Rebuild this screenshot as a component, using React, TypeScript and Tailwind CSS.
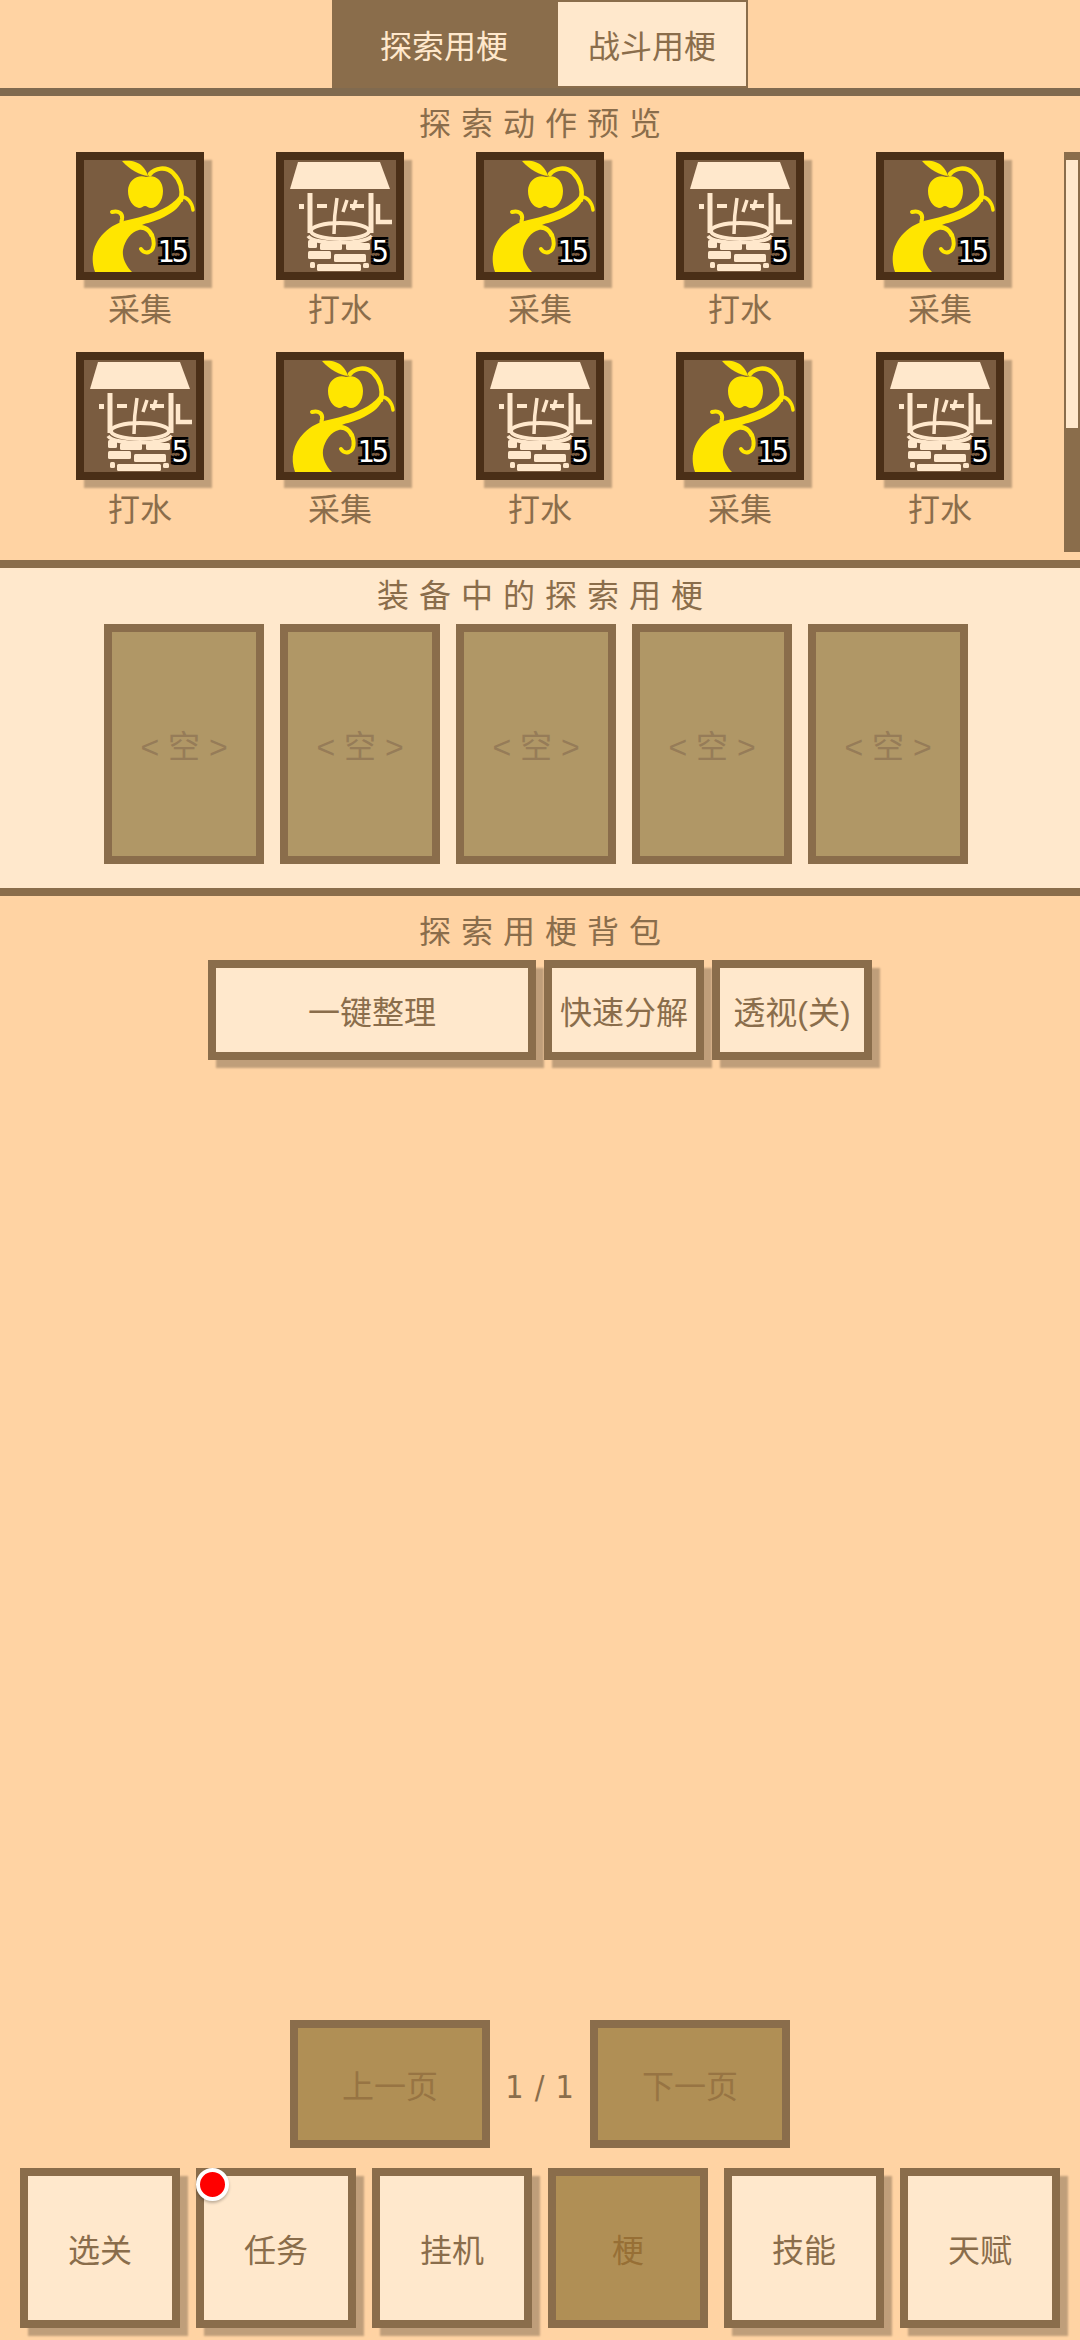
import React from "react";

const actions = [
  "gather", "water", "gather", "water", "gather",
  "water", "gather", "water", "gather", "water",
];

function VineIcon() {
  const y = "#ffe600";
  return (
    <svg viewBox="0 0 112 112" className="w-full h-full block">
      {/* leaf */}
      <path d="M38 1 C48 0 54 2 58 6 C61 9 63 12 64 16 C56 15 46 10 38 1 Z" fill={y} />
      {/* apple */}
      <path d="M62 17 C70 14 79 19 79 31 C79 41 73 48 67 48 C64 48 63 46 61 46 C59 46 58 48 55 48 C49 47 44 40 44 31 C44 20 54 14 62 17 Z" fill={y} />
      {/* arc over the apple */}
      <path d="M66 14 C71 8 82 6 89 13 C96 20 99 30 97 40" fill="none" stroke={y} strokeWidth="4.5" strokeLinecap="round" />
      <path d="M98 37 C103 37 108 42 109 50" fill="none" stroke={y} strokeWidth="3.5" strokeLinecap="round" />
      {/* trunk and curl */}
      <path d="M11 112 C6 98 9 84 20 73 C27 66 35 62 44 60 C58 57 72 53 84 46 C90 42 93 39 95 36 L99 38 C97 46 90 52 80 57 C70 62 62 63 58 65 C64 66 69 70 70 76 L66 77 C64 72 60 69 55 70 C47 72 41 80 39 90 C38 98 42 106 48 112 Z" fill={y} />
      <path d="M68 75 C71 83 70 90 65 92 C62 93 59 92 57 89" fill="none" stroke={y} strokeWidth="4" strokeLinecap="round" />
      {/* sprout */}
      <path d="M28 52 C35 50 39 54 38 59 C37 62 37 64 39 66" fill="none" stroke={y} strokeWidth="4" strokeLinecap="round" />
    </svg>
  );
}

function WellIcon() {
  const c = "#ffe8cc";
  return (
    <svg viewBox="0 0 112 112" className="w-full h-full block">
      <path d="M14 2 L96 2 L106 29 L6 29 Z" fill={c} />
      <g fill="none" stroke={c} strokeWidth="5">
        <path d="M26 33 V73" />
        <path d="M87 33 V73" />
        <path d="M53 38 C51 50 50 60 50 74" strokeWidth="3.5" />
        <path d="M33 46 H43 M66 46 H80" strokeWidth="4" />
        <path d="M63 40 L59 52 M72 40 L69 50" strokeWidth="3.5" />
        <path d="M94 44 V62 H108" strokeWidth="4.5" />
        <ellipse cx="56" cy="71" rx="29" ry="8" strokeWidth="4" />
        <path d="M24 76 C30 85 80 85 88 76" strokeWidth="3.5" />
      </g>
      <rect x="15" y="44" width="5" height="5" fill={c} />
      <g fill={c}>
        <rect x="24" y="80" width="9" height="8" rx="1.5" />
        <rect x="36" y="83" width="22" height="7" rx="1.5" />
        <rect x="62" y="83" width="24" height="7" rx="1.5" />
        <rect x="24" y="91" width="23" height="8" rx="1.5" />
        <rect x="50" y="94" width="32" height="8" rx="1.5" />
        <rect x="26" y="102" width="5" height="6" rx="1.5" />
        <rect x="33" y="104" width="44" height="7" rx="1.5" />
        <rect x="79" y="103" width="6" height="5" rx="1.5" />
      </g>
    </svg>
  );
}

function ActionCell({ kind }: { kind: string }) {
  const gather = kind === "gather";
  return (
    <div className="h-[200px] flex flex-col items-center">
      <div className="relative w-[128px] h-[128px] border-8 border-[#4a2f17] bg-[#7a5c40] shadow-[8px_8px_2px_rgba(0,0,0,0.25)]">
        {gather ? <VineIcon /> : <WellIcon />}
        <span className="absolute right-[10px] bottom-[4px] font-['DejaVu_Sans',sans-serif] [font-stretch:condensed] text-[30px] leading-[32px] tracking-[-3px] text-white [text-shadow:3px_0_0_#000,-3px_0_0_#000,0_3px_0_#000,0_-3px_0_#000,3px_3px_0_#000,-3px_3px_0_#000,3px_-3px_0_#000,-3px_-3px_0_#000]">
          {gather ? "15" : "5"}
        </span>
      </div>
      <div className="mt-[6px] text-[32px] leading-[48px]">{gather ? "采集" : "打水"}</div>
    </div>
  );
}

function NavButton({ label, active, dot }: { label: string; active?: boolean; dot?: boolean }) {
  return (
    <div
      className={
        active
          ? "relative w-[160px] h-[160px] pt-[6px] border-8 border-[#8a6d4b] bg-[#b08f55] text-[#976f35] flex items-center justify-center text-[32px]"
          : "relative w-[160px] h-[160px] pt-[6px] border-8 border-[#8a6d4b] bg-[#ffe8cc] shadow-[8px_8px_2px_rgba(0,0,0,0.25)] flex items-center justify-center text-[32px]"
      }
    >
      {label}
      {dot && (
        <span className="absolute left-[-8px] top-[-8px] w-[33px] h-[33px] rounded-full bg-[#ff0000] border-4 border-white shadow-[0_2px_3px_rgba(0,0,0,0.25)]" />
      )}
    </div>
  );
}

export default function App() {
  return (
    <div className="w-[1080px] h-[2340px] flex flex-col bg-[#ffd3a3] text-[#8a6d4b] font-['Liberation_Sans','Noto_Sans_CJK_SC',sans-serif] overflow-hidden">
      {/* tabs */}
      <div className="h-[88px] flex justify-center shrink-0">
        <div className="w-[224px] pt-[6px] bg-[#8a6d4b] text-[#ffe8cc] flex items-center justify-center text-[32px]">探索用梗</div>
        <div className="w-[192px] pt-[6px] bg-[#ffe8cc] border-2 border-[#8a6d4b] flex items-center justify-center text-[32px]">战斗用梗</div>
      </div>

      {/* action preview */}
      <div className="border-t-8 border-[#806a4f] h-[472px] shrink-0">
        <div className="h-[52px] pt-[4px] pl-[10px] flex items-center justify-center text-[32px] tracking-[10px]">探索动作预览</div>
        <div className="mt-[4px] flex pl-[40px]">
          <div className="w-[1000px] grid grid-cols-5">
            {actions.map((a, i) => (
              <ActionCell key={i} kind={a} />
            ))}
          </div>
          <div className="ml-auto w-[16px] h-[400px] bg-[#8a6d4b] pt-[8px] pl-[2px] pr-[2px]">
            <div className="h-[268px] bg-[#ffe8cc]" />
          </div>
        </div>
      </div>

      {/* equipped */}
      <div className="border-y-8 border-[#8a6d4b] bg-[#ffe8cc] h-[336px] shrink-0">
        <div className="h-[56px] pl-[10px] flex items-center justify-center text-[32px] tracking-[10px]">装备中的探索用梗</div>
        <div className="flex gap-4 pl-[104px]">
          {[0, 1, 2, 3, 4].map((i) => (
            <div key={i} className="w-[160px] h-[240px] pt-[6px] border-8 border-[#8a6d4b] bg-[#b09766] text-[#967c58] flex items-center justify-center text-[32px]">
              &lt; 空 &gt;
            </div>
          ))}
        </div>
      </div>

      {/* backpack */}
      <div className="flex-1 flex flex-col">
        <div className="h-[64px] pt-[8px] pl-[10px] flex items-center justify-center text-[32px] tracking-[10px]">探索用梗背包</div>
        <div className="flex justify-center gap-2">
          <div className="w-[328px] h-[100px] pt-[6px] border-8 border-[#8a6d4b] bg-[#ffe8cc] shadow-[8px_8px_2px_rgba(0,0,0,0.25)] flex items-center justify-center text-[32px]">一键整理</div>
          <div className="w-[160px] h-[100px] pt-[6px] border-8 border-[#8a6d4b] bg-[#ffe8cc] shadow-[8px_8px_2px_rgba(0,0,0,0.25)] flex items-center justify-center text-[32px]">快速分解</div>
          <div className="w-[160px] h-[100px] pt-[6px] border-8 border-[#8a6d4b] bg-[#ffe8cc] shadow-[8px_8px_2px_rgba(0,0,0,0.25)] flex items-center justify-center text-[32px] whitespace-nowrap">透视(关)</div>
        </div>

        <div className="mt-auto flex justify-center items-center">
          <div className="w-[200px] h-[128px] pt-[6px] border-8 border-[#8a6d4b] bg-[#b08f55] text-[#977443] flex items-center justify-center text-[32px]">上一页</div>
          <div className="w-[100px] pt-[6px] text-center text-[32px] tracking-[1px] font-['DejaVu_Sans',sans-serif] [font-stretch:condensed]">1 / 1</div>
          <div className="w-[200px] h-[128px] pt-[6px] border-8 border-[#8a6d4b] bg-[#b08f55] text-[#977443] flex items-center justify-center text-[32px]">下一页</div>
        </div>

        <div className="mt-[20px] mb-[12px] flex justify-center gap-4">
          <NavButton label="选关" />
          <NavButton label="任务" dot />
          <NavButton label="挂机" />
          <NavButton label="梗" active />
          <NavButton label="技能" />
          <NavButton label="天赋" />
        </div>
      </div>
    </div>
  );
}
